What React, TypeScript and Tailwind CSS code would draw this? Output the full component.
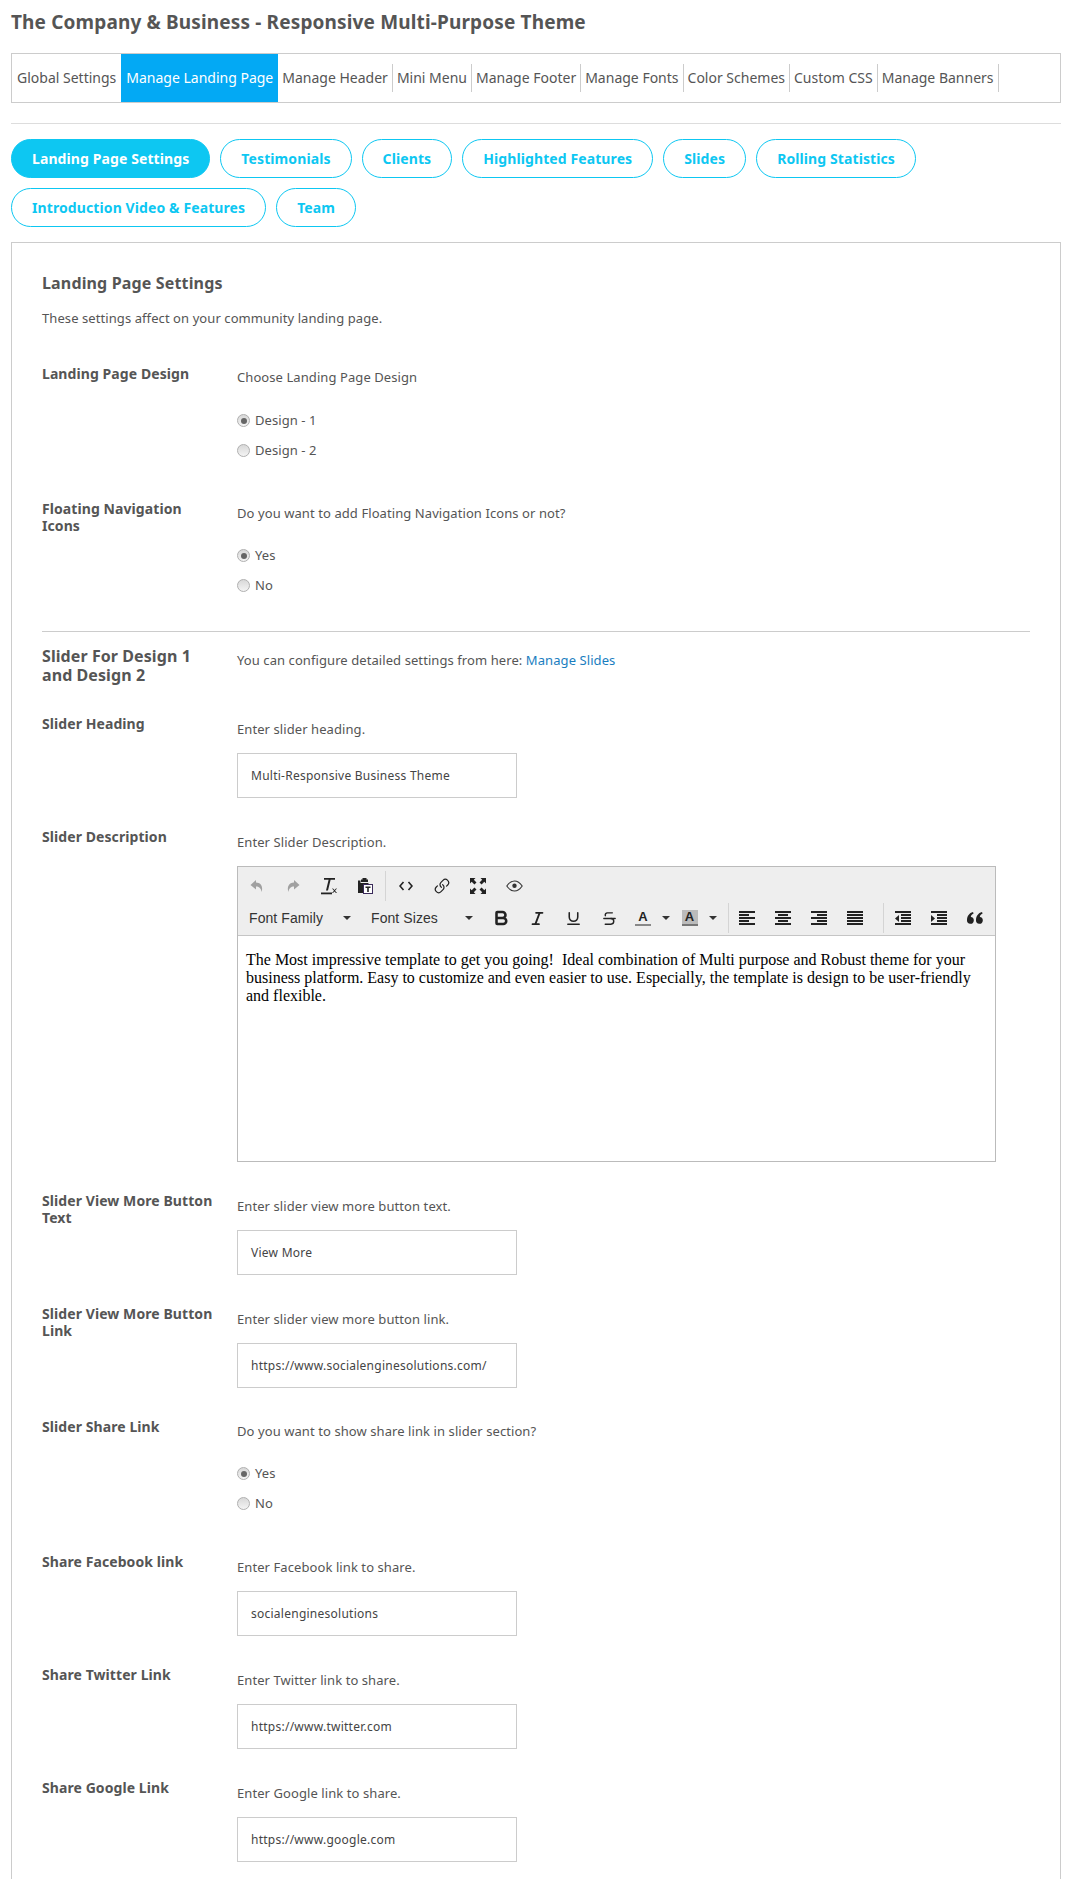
import type { ReactNode } from "react";
import { Bold, Italic, Link, Strikethrough, Underline } from "lucide-react";

const tabs = ["Global Settings", "Manage Landing Page", "Manage Header", "Mini Menu", "Manage Footer", "Manage Fonts", "Color Schemes", "Custom CSS", "Manage Banners"];
const pills = ["Landing Page Settings", "Testimonials", "Clients", "Highlighted Features", "Slides", "Rolling Statistics", "Introduction Video & Features", "Team"];

function Radio({ label, checked }: { label: string; checked?: boolean }) {
  return (
    <div className="flex items-center h-[30px]">
      <span className="w-[13px] h-[13px] rounded-full border border-[#b0b0b0] bg-gradient-to-b from-[#d8d8d8] to-[#f4f4f4] flex items-center justify-center mr-[5px] -mt-px">
        {checked && <span className="w-[6px] h-[6px] rounded-full bg-[#666]" />}
      </span>
      <span>{label}</span>
    </div>
  );
}

function Label({ children, big }: { children: ReactNode; big?: boolean }) {
  return <div className={`w-[195px] shrink-0 pr-5 font-bold ${big ? "text-base leading-[19px]" : "text-sm leading-[17px]"}`}>{children}</div>;
}

function Field({ label, hint, value }: { label: string; hint: string; value: string }) {
  return (
    <div className="flex mt-[30px]">
      <Label>{label}</Label>
      <div className="pt-[6px]">
        <p className="leading-4">{hint}</p>
        <div className="mt-4 w-[280px] h-[45px] border border-[#ccc] flex items-center px-[13px] text-xs tracking-[0.25px] text-[#444]">{value}</div>
      </div>
    </div>
  );
}

function Icon({ children, w = "w-9" }: { children: ReactNode; w?: string }) {
  return <span className={`${w} h-full shrink-0 flex items-center justify-center`}>{children}</span>;
}

function Arrow() {
  return <span className="w-0 h-0 border-x-4 border-x-transparent border-t-4 border-t-[#333]" />;
}

function Sep({ className }: { className: string }) {
  return <span className={`w-px h-[30px] bg-[#d4d4d4] shrink-0 ${className}`} />;
}

// stacked bars for the align / indent buttons
function Bars({ rows, marker }: { rows: [number, number][]; marker?: "in" | "out" }) {
  return (
    <svg width="16" height="15" viewBox="0 0 16 15" fill="#222">
      {rows.map(([x, w], i) => (
        <rect key={i} x={x} y={i * 3} width={w} height="2" />
      ))}
      {marker === "out" && <path d="M4 4l-4 3.5L4 11z" />}
      {marker === "in" && <path d="M0 4l4 3.5L0 11z" />}
    </svg>
  );
}

function UndoIcon({ flip }: { flip?: boolean }) {
  return (
    <svg width="16" height="16" viewBox="0 0 16 16" fill="#a0a0a0" className={flip ? "-scale-x-100" : ""}>
      <path d="M7 2L1.5 7 7 11.5V8.6c3 0 4.8 1.3 5.6 5.4 1.6-5-.4-9.2-5.6-9.4z" />
    </svg>
  );
}

function Toolbar() {
  return (
    <div className="bg-[#eee] border-b border-[#c5c5c5] py-[2px] pl-px">
      <div className="flex items-center h-[34px] text-[#222]">
        <Icon><UndoIcon /></Icon>
        <Icon><UndoIcon flip /></Icon>
        <Icon>
          <svg width="18" height="17" viewBox="0 0 18 17" fill="#222">
            <path d="M4 0h11v1.8h-4.4L8 12.5H6L8.6 1.8H4z" />
            <rect x="1" y="14.5" width="11" height="1.8" />
            <path d="M12 10.5l1 0 1.5 1.6 1.5-1.6 1 0-2 2.2 2 2.3-1 0-1.5-1.6-1.5 1.6-1 0 2-2.3z" />
          </svg>
        </Icon>
        <Icon>
          <svg width="16" height="16" viewBox="0 0 16 16">
            <path d="M4 1.5h1.5V0h4v1.5H11V4H4z" fill="#222" />
            <path d="M1 2.5h2.5V5h8v1.5H6.5V15H1z" fill="#222" />
            <rect x="6.5" y="6.5" width="9" height="9" fill="#fff" stroke="#3a2a5a" />
            <path d="M8.5 8.5h5v1.4h-1.7v4h-1.6v-4H8.5z" fill="#222" />
          </svg>
        </Icon>
        <Sep className="mx-[2px]" />
        <Icon>
          <svg width="14" height="10" viewBox="0 0 14 10" fill="none" stroke="#222" strokeWidth="1.6">
            <path d="M4.5 1L1 5l3.5 4M9.5 1L13 5l-3.5 4" />
          </svg>
        </Icon>
        <Icon><Link size={16} strokeWidth={1.8} color="#222" className="-scale-x-100 rotate-90" /></Icon>
        <Icon>
          <svg width="16" height="16" viewBox="0 0 16 16" fill="#222">
            <path d="M0 0h5.500L3.800 1.700 6.500 4.400 4.400 6.500 1.700 3.800 0 5.500zM16 0v5.500l-1.700-1.700-2.700 2.700-2.100-2.100 2.700-2.700L10.500 0zM0 16v-5.500l1.700 1.700 2.700-2.700 2.100 2.100-2.700 2.700L5.500 16zM16 16h-5.500l1.700-1.700-2.700-2.700 2.100-2.100 2.700 2.700 1.700-1.700z" />
          </svg>
        </Icon>
        <Icon>
          <svg width="17" height="12" viewBox="0 0 17 12" fill="none" stroke="#333">
            <path d="M.8 6C3 2.800 5.500 1 8.500 1s5.500 1.800 7.700 5c-2.200 3.200-4.700 5-7.700 5S3 9.200.8 6z" strokeWidth="1.100" />
            <circle cx="8.500" cy="5.700" r="2.200" fill="#333" stroke="none" />
          </svg>
        </Icon>
      </div>
      <div className="flex items-center h-[30px] text-[#333] text-sm font-['Liberation_Sans',sans-serif]">
        <div className="w-[123px] h-full shrink-0 flex items-center pl-[10px] relative">
          Font Family
          <span className="absolute left-[104px] top-[13px] flex"><Arrow /></span>
        </div>
        <div className="w-[121px] h-full shrink-0 flex items-center pl-[9px] relative">
          Font Sizes
          <span className="absolute left-[103px] top-[13px] flex"><Arrow /></span>
        </div>
        <Icon><Bold size={18} strokeWidth={3.4} color="#222" /></Icon>
        <Icon><Italic size={17} strokeWidth={2.6} color="#222" /></Icon>
        <Icon><Underline size={17} strokeWidth={2.2} color="#222" /></Icon>
        <Icon><Strikethrough size={17} strokeWidth={2} color="#222" /></Icon>
        <Icon w="w-8">
          <span className="w-4 text-center text-[13px] leading-[14px] font-bold text-[#222] border-b-2 border-[#888]">A</span>
        </Icon>
        <Icon w="w-[14px]"><Arrow /></Icon>
        <Icon w="w-[33px]">
          <span className="w-4 text-center text-[13px] leading-[14px] font-bold text-[#222] bg-[#bbb] border-b-2 border-[#777]">A</span>
        </Icon>
        <Icon w="w-[14px]"><Arrow /></Icon>
        <Sep className="ml-2" />
        <Icon><Bars rows={[[0, 16], [0, 10], [0, 16], [0, 10], [0, 16]]} /></Icon>
        <Icon><Bars rows={[[0, 16], [3, 10], [0, 16], [3, 10], [0, 16]]} /></Icon>
        <Icon><Bars rows={[[0, 16], [6, 10], [0, 16], [6, 10], [0, 16]]} /></Icon>
        <Icon><Bars rows={[[0, 16], [0, 16], [0, 16], [0, 16], [0, 16]]} /></Icon>
        <Sep className="ml-[10px] mr-px" />
        <Icon><Bars marker="out" rows={[[0, 16], [6, 10], [6, 10], [6, 10], [0, 16]]} /></Icon>
        <Icon><Bars marker="in" rows={[[0, 16], [6, 10], [6, 10], [6, 10], [0, 16]]} /></Icon>
        <Icon>
          <svg width="16" height="12" viewBox="0 0 16 12" fill="#222">
            <path d="M0 8.200C0 4 2.300 1 6 0l.6 1.500C4.800 2.400 3.900 3.500 3.800 5a3.400 3.400 0 1 1-3.800 3.200z" />
            <path d="M9 8.200C9 4 11.300 1 15 0l.6 1.500c-1.800.9-2.700 2-2.800 3.500A3.400 3.400 0 1 1 9 8.200z" />
          </svg>
        </Icon>
      </div>
    </div>
  );
}

export default function App() {
  return (
    <div className="h-[1879px] overflow-hidden bg-white px-[11px] text-[13px] text-[#555] font-['Noto_Sans',sans-serif]">
      <h1 className="pt-[11px] text-[19px] tracking-[0.15px] font-bold leading-[22px]">The Company &amp; Business - Responsive Multi-Purpose Theme</h1>
      <div className="mt-5 w-[1050px] h-[50px] border border-[#ccc] flex items-center text-sm">
        {tabs.map((t, i) => (
          <span
            key={t}
            className={
              i === 1
                ? "h-full px-[5px] flex items-center bg-[#03a9f4] text-white"
                : i === 0
                  ? "h-7 px-[5px] flex items-center"
                  : "h-7 px-[4px] flex items-center border-r border-[#ccc]"
            }
          >
            {t}
          </span>
        ))}
      </div>
      <div className="mt-5 w-[1050px] border-t border-[#ddd]" />
      <div className="mt-[15px] flex flex-wrap gap-[10px] w-[1050px] text-sm tracking-[0.1px]">
        {pills.map((p, i) => (
          <span key={p} className={`h-[39px] px-5 rounded-[20px] border border-[#0dc7f2] font-bold flex items-center ${i === 0 ? "bg-[#0dc7f2] text-white" : "text-[#0dc7f2]"}`}>
            {p}
          </span>
        ))}
      </div>

      <div className="mt-[15px] w-[1050px] border border-[#ccc] px-[30px] pt-[30px] pb-[40px] tracking-[0.08px]">
        <h2 className="text-base tracking-[0.15px] font-bold leading-5">Landing Page Settings</h2>
        <p className="mt-[17px] leading-4">These settings affect on your community landing page.</p>

        <div className="flex mt-[39px]">
          <Label>Landing Page Design</Label>
          <div className="pt-1">
            <p className="leading-4">Choose Landing Page Design</p>
            <div className="mt-[21px]">
              <Radio label="Design - 1" checked />
              <Radio label="Design - 2" />
            </div>
          </div>
        </div>

        <div className="flex mt-[34px]">
          <Label>Floating Navigation Icons</Label>
          <div className="pt-[5px]">
            <p className="leading-4">Do you want to add Floating Navigation Icons or not?</p>
            <div className="mt-5">
              <Radio label="Yes" checked />
              <Radio label="No" />
            </div>
          </div>
        </div>

        <div className="mt-[30px] border-t border-[#ccc]" />

        <div className="flex mt-[15px]">
          <Label big>Slider For Design 1 and Design 2</Label>
          <p className="pt-[5px] leading-4">
            You can configure detailed settings from here: <span className="text-[#1a7ebf]">Manage Slides</span>
          </p>
        </div>

        <Field label="Slider Heading" hint="Enter slider heading." value="Multi-Responsive Business Theme" />

        <div className="flex mt-[30px]">
          <Label>Slider Description</Label>
          <div className="pt-[6px]">
            <p className="leading-4">Enter Slider Description.</p>
            <div className="mt-4 w-[759px] h-[296px] border border-[#bbb]">
              <Toolbar />
              <p className="px-2 pt-[15px] text-base leading-[18px] tracking-normal text-black font-['Liberation_Serif',serif] whitespace-pre-wrap">
                {"The Most impressive template to get you going!  Ideal combination of Multi purpose and Robust theme for your business platform. Easy to customize and even easier to use. Especially, the template is design to be user-friendly and flexible."}
              </p>
            </div>
          </div>
        </div>

        <Field label="Slider View More Button Text" hint="Enter slider view more button text." value="View More" />
        <Field label="Slider View More Button Link" hint="Enter slider view more button link." value="https://www.socialenginesolutions.com/" />

        <div className="flex mt-[30px]">
          <Label>Slider Share Link</Label>
          <div className="pt-[5px]">
            <p className="leading-4">Do you want to show share link in slider section?</p>
            <div className="mt-5">
              <Radio label="Yes" checked />
              <Radio label="No" />
            </div>
          </div>
        </div>

        <div className="h-1" />
        <Field label="Share Facebook link" hint="Enter Facebook link to share." value="socialenginesolutions" />
        <Field label="Share Twitter Link" hint="Enter Twitter link to share." value="https://www.twitter.com" />
        <Field label="Share Google Link" hint="Enter Google link to share." value="https://www.google.com" />
      </div>
    </div>
  );
}
